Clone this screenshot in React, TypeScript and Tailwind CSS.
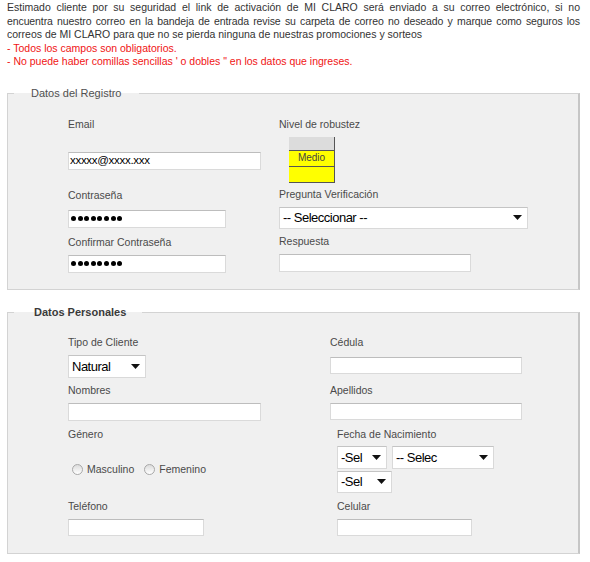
import React from 'react';

const Label: React.FC<{ children: React.ReactNode; className?: string }> = ({ children, className = '' }) => (
  <div className={`h-[13px] leading-[13px] text-[10.5px] text-[#4a4a4a] whitespace-nowrap ${className}`}>{children}</div>
);

const TextBox: React.FC<{ width: string; height?: string; className?: string; children?: React.ReactNode }> = ({
  width,
  height = 'h-[18px]',
  className = '',
  children,
}) => (
  <div
    className={`${width} ${height} ${className} bg-white border border-[#dadada] border-t-[#bdbdbd] flex items-center pl-[1px] overflow-hidden`}
  >
    {children}
  </div>
);

const PasswordDots = () => (
  <div className="flex gap-[1.6px] pl-[1px]">
    {[0, 1, 2, 3, 4, 5, 6, 7].map((i) => (
      <span key={i} className="w-[5px] h-[5px] rounded-full bg-black" />
    ))}
  </div>
);

const Select: React.FC<{ width: string; height?: string; className?: string; children: React.ReactNode }> = ({
  width,
  height = 'h-[22px]',
  className = '',
  children,
}) => (
  <div
    className={`${width} ${height} ${className} bg-white border border-[#d9d9d9] border-t-[#c4c4c4] flex items-center justify-between pl-[3px] pr-[5px]`}
  >
    <span className="text-[13px] tracking-[-0.5px] text-black leading-none whitespace-nowrap">{children}</span>
    <svg width="9" height="5" viewBox="0 0 9 5" className="shrink-0">
      <path d="M0 0h9L4.5 5z" fill="#111" />
    </svg>
  </div>
);

const Radio: React.FC<{ label: string }> = ({ label }) => (
  <label className="flex items-center gap-[4px] text-[10.5px] text-[#4a4a4a]">
    <span className="w-[11px] h-[11px] rounded-full border border-[#a8a8a8] bg-linear-to-b from-[#dcdcdc] to-white" />
    {label}
  </label>
);

const StrengthMeter = () => (
  <div className="ml-[10px] mt-[6px] w-[46px] flex flex-col border-r border-b border-[#555] text-[10px] text-[#444]">
    <div className="h-[14px] bg-[#dcdcdc] border-b border-[#555]" />
    <div className="h-[16px] bg-[#ffff00] border-b border-[#555] flex items-center justify-center leading-none">
      Medio
    </div>
    <div className="h-[15px] bg-[#ffff00]" />
  </div>
);

export default function App() {
  return (
    <div className="w-[590px] min-h-[562px] bg-white pl-[7px] pr-[10px] font-['Liberation_Sans',Arial,sans-serif] text-[10.5px]">
      <div className="pt-[1px] leading-[13.5px] text-[#333]">
        <div className="whitespace-nowrap text-justify [text-align-last:justify]">
          Estimado cliente por su seguridad el link de activación de MI CLARO será enviado a su correo electrónico, si no
        </div>
        <div className="whitespace-nowrap text-justify [text-align-last:justify] tracking-[-0.1px]">
          encuentra nuestro correo en la bandeja de entrada revise su carpeta de correo no deseado y marque como seguros los
        </div>
        <div>correos de MI CLARO para que no se pierda ninguna de nuestras promociones y sorteos</div>
        <div className="text-[#f01414]">- Todos los campos son obligatorios.</div>
        <div className="text-[#f01414]">- No puede haber comillas sencillas ' o dobles " en los datos que ingreses.</div>
      </div>

      {/* registro */}
      <fieldset className="mt-[18px] min-w-0 border border-[#d3d3d3] border-r-2 border-r-[#c6c6c6] bg-[#f0f0f0] px-[6px] pb-[16px]">
        <legend className="px-[17px] leading-[13px] text-[11px] text-[#505050]">Datos del Registro</legend>
        <div className="flex pt-[18px] pl-[54px]">
          <div className="w-[211px] flex flex-col items-start">
            <Label>Email</Label>
            <TextBox width="w-[193px]" className="mt-[21px]">
              <span className="text-[11.5px] tracking-[-0.3px] text-black leading-none">xxxxx@xxxx.xxx</span>
            </TextBox>
            <Label className="mt-[19px]">Contraseña</Label>
            <TextBox width="w-[158px]" className="mt-[8px]">
              <PasswordDots />
            </TextBox>
            <Label className="mt-[8px]">Confirmar Contraseña</Label>
            <TextBox width="w-[158px]" className="mt-[6px]">
              <PasswordDots />
            </TextBox>
          </div>
          <div className="flex flex-col items-start">
            <Label>Nivel de robustez</Label>
            <StrengthMeter />
            <Label className="mt-[5px]">Pregunta Verificación</Label>
            <Select width="w-[249px]" className="mt-[6px]">
              -- Seleccionar --
            </Select>
            <Label className="mt-[6px]">Respuesta</Label>
            <TextBox width="w-[192px]" className="mt-[6px]" />
          </div>
        </div>
      </fieldset>

      {/* personales */}
      <fieldset className="mt-[16px] min-w-0 border border-[#d3d3d3] border-r-2 border-r-[#c6c6c6] bg-[#f0f0f0] px-[6px] pb-[17px]">
        <legend className="pl-[20px] pr-[16px] leading-[13px] text-[11px] font-bold text-[#3a3a3a]">Datos Personales</legend>
        <div className="flex pt-[17px] pl-[54px]">
          <div className="w-[262px] flex flex-col items-start">
            <Label>Tipo de Cliente</Label>
            <Select width="w-[78px]" height="h-[23px]" className="mt-[6px]">
              Natural
            </Select>
            <Label className="mt-[6px]">Nombres</Label>
            <TextBox width="w-[193px]" className="mt-[6px]" />
            <Label className="mt-[7px]">Género</Label>
            <div className="mt-[22px] ml-[4px] h-[14px] flex items-center gap-[10px]">
              <Radio label="Masculino" />
              <Radio label="Femenino" />
            </div>
            <Label className="mt-[23px]">Teléfono</Label>
            <TextBox width="w-[136px]" height="h-[17px]" className="mt-[6px]" />
          </div>
          <div className="flex flex-col items-start">
            <Label>Cédula</Label>
            <TextBox width="w-[192px]" height="h-[17px]" className="mt-[8px]" />
            <Label className="mt-[10px]">Apellidos</Label>
            <TextBox width="w-[192px]" height="h-[17px]" className="mt-[6px]" />
            <div className="ml-[7px] flex flex-col items-start">
              <Label className="mt-[8px]">Fecha de Nacimiento</Label>
              <div className="mt-[5px] flex gap-[5px]">
                <Select width="w-[50px]" height="h-[23px]">-Sel</Select>
                <Select width="w-[102px]" height="h-[23px]">-- Selec</Select>
              </div>
              <Select width="w-[55px]" className="mt-[2px]">
                -Sel
              </Select>
              <Label className="mt-[7px]">Celular</Label>
              <TextBox width="w-[135px]" height="h-[17px]" className="mt-[6px]" />
            </div>
          </div>
        </div>
      </fieldset>
    </div>
  );
}
